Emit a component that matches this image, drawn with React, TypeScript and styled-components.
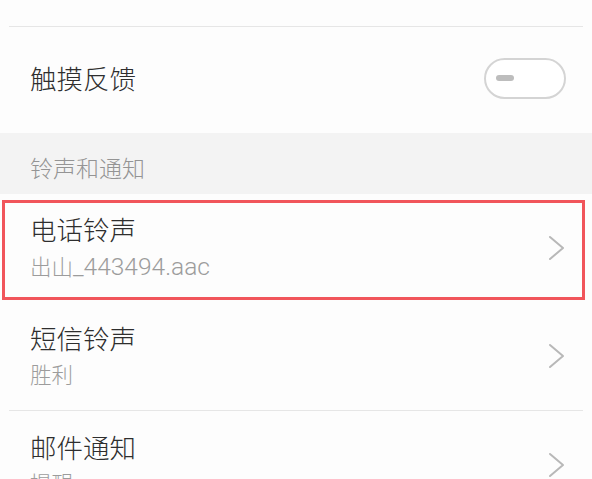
import React from 'react';
import styled, { createGlobalStyle } from 'styled-components';

const GlobalStyle = createGlobalStyle`
  html, body {
    margin: 0;
    padding: 0;
    background: #fdfdfd;
  }
  body {
    font-family: Roboto, "Noto Sans CJK SC", "Noto Sans", sans-serif;
    overflow: hidden;
  }
`;

const Screen = styled.div`
  width: 592px;
  height: 479px;
  overflow: hidden;
  background: #fdfdfd;
  display: flex;
  flex-direction: column;
`;

const Divider = styled.div`
  height: 1px;
  margin: 0 9px;
  background: #e6e6e6;
  flex-shrink: 0;
`;

const TopSpacer = styled.div`
  height: 26px;
  flex-shrink: 0;
`;

const ToggleRow = styled.div`
  height: 106px;
  flex-shrink: 0;
  display: flex;
  align-items: center;
  justify-content: space-between;
  padding: 0 26px 0 30px;
`;

const Title = styled.div`
  font-size: 26.5px;
  line-height: 32px;
  color: #2e2e2e;
  font-weight: 300;
`;

const Toggle = styled.div`
  width: 68px;
  height: 37px;
  border: 2px solid #d4d4d4;
  border-radius: 22px;
  background: #fff;
  display: flex;
  align-items: center;
  padding-left: 10px;
  box-sizing: content-box;
  margin-bottom: 4px;
`;

const ToggleDash = styled.span`
  width: 18px;
  height: 6px;
  border-radius: 3px;
  background: #bdbdbd;
`;

const SectionHeader = styled.div`
  height: 61px;
  flex-shrink: 0;
  box-sizing: border-box;
  background: #f3f3f3;
  padding: 25px 0 0 30px;
  font-size: 23px;
  line-height: 24px;
  color: #949494;
  font-weight: 300;
`;

const Item = styled.div<{ $highlight?: boolean }>`
  position: relative;
  height: 108px;
  flex-shrink: 0;
  box-sizing: border-box;
  display: flex;
  align-items: center;
  justify-content: space-between;
  padding: 0 27px 0 30px;

  ${({ $highlight }) =>
    $highlight &&
    `
    &::after {
      content: '';
      position: absolute;
      top: 6px;
      bottom: 2px;
      left: 2px;
      right: 7px;
      border: 3px solid #f1555b;
      pointer-events: none;
    }
  `}
`;

const ItemText = styled.div`
  display: flex;
  flex-direction: column;
  gap: 5px;
  padding-top: 2px;
`;

const Subtitle = styled.div`
  font-size: 21.5px;
  line-height: 30px;
  color: #9c9c9c;
  font-weight: 300;
`;

const Latin = styled.span`
  font-size: 24.5px;
  font-weight: 300;
`;

const Chevron = () => (
  <svg width="17" height="26" viewBox="0 0 17 26" fill="none">
    <path d="M2 2 L15 13 L2 24" stroke="#b8b8b8" strokeWidth="2" strokeLinecap="round" strokeLinejoin="round" />
  </svg>
);

// latin runs in the reference render noticeably bigger than the CJK glyphs
const renderMixed = (text: string) =>
  text.split(/([\x20-\x7e]+)/).map((part, i) =>
    /^[\x20-\x7e]+$/.test(part) ? <Latin key={i}>{part}</Latin> : part
  );

const items = [
  { title: '电话铃声', sub: '出山_443494.aac', highlight: true, divider: false },
  { title: '短信铃声', sub: '胜利', divider: true },
  { title: '邮件通知', sub: '提醒', divider: false },
];

export default function App() {
  return (
    <Screen>
      <GlobalStyle />
      <TopSpacer />
      <Divider />
      <ToggleRow>
        <Title>触摸反馈</Title>
        <Toggle>
          <ToggleDash />
        </Toggle>
      </ToggleRow>
      <SectionHeader>铃声和通知</SectionHeader>
      {items.map((it) => (
        <React.Fragment key={it.title}>
          <Item $highlight={it.highlight}>
            <ItemText>
              <Title>{it.title}</Title>
              <Subtitle>{renderMixed(it.sub)}</Subtitle>
            </ItemText>
            <Chevron />
          </Item>
          {it.divider && <Divider />}
        </React.Fragment>
      ))}
    </Screen>
  );
}
